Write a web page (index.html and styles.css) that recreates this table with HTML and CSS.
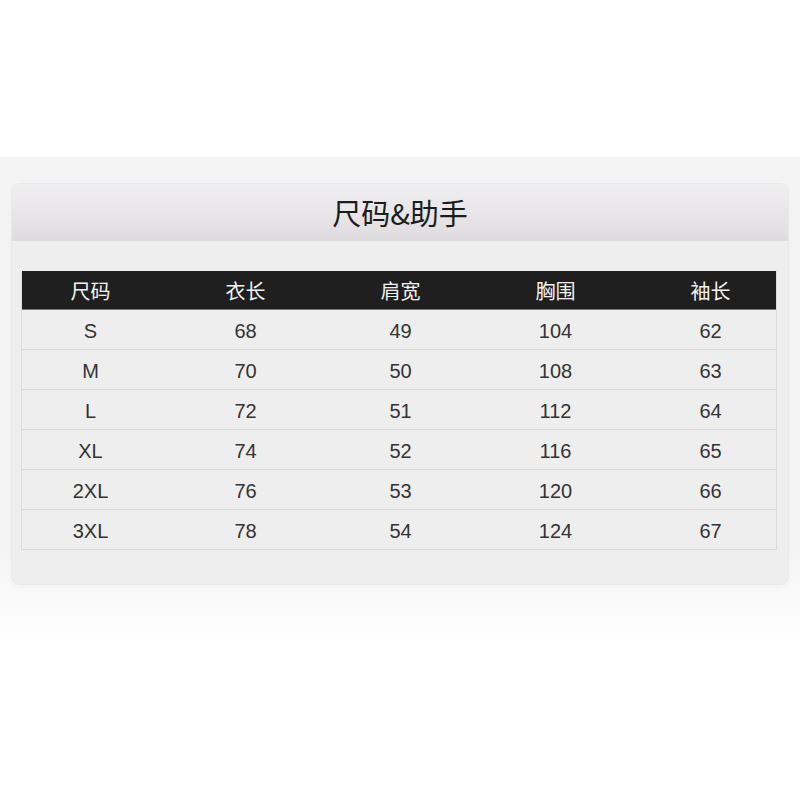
FILE: index.html
```html
<!DOCTYPE html>
<html lang="zh">
<head>
<meta charset="utf-8">
<title>尺码&amp;助手</title>
<link rel="stylesheet" href="styles.css">
</head>
<body>
<div class="band">
  <div class="card">
    <div class="card-head">尺码&amp;助手</div>
    <div class="card-body">
      <div class="table">
        <div class="row head"><div class="cells"><span>尺码</span><span>衣长</span><span>肩宽</span><span>胸围</span><span>袖长</span></div></div>
        <div class="row"><div class="cells"><span>S</span><span>68</span><span>49</span><span>104</span><span>62</span></div></div>
        <div class="row"><div class="cells"><span>M</span><span>70</span><span>50</span><span>108</span><span>63</span></div></div>
        <div class="row"><div class="cells"><span>L</span><span>72</span><span>51</span><span>112</span><span>64</span></div></div>
        <div class="row"><div class="cells"><span>XL</span><span>74</span><span>52</span><span>116</span><span>65</span></div></div>
        <div class="row"><div class="cells"><span>2XL</span><span>76</span><span>53</span><span>120</span><span>66</span></div></div>
        <div class="row"><div class="cells"><span>3XL</span><span>78</span><span>54</span><span>124</span><span>67</span></div></div>
      </div>
    </div>
  </div>
</div>
</body>
</html>
```

FILE: styles.css
```css
html, body {
  margin: 0;
  padding: 0;
  background: #ffffff;
}
body {
  font-family: "Liberation Sans", "Noto Sans CJK SC", sans-serif;
  color: #333;
}
.band {
  margin-top: 157px;
  padding: 26px 11px 60px;
  background: linear-gradient(to bottom, #f4f4f4 0%, #f4f4f4 80%, #ffffff 100%);
}
.card {
  height: 400px;
  border: 1px solid #e9e9e9;
  border-radius: 9px;
  background: #efeeef;
  overflow: hidden;
  box-shadow: 0 2px 6px rgba(0,0,0,0.03);
}
.card-head {
  height: 56px;
  border-bottom: 1px solid #dcd9dc;
  background: linear-gradient(to bottom, #efeef0 0%, #e8e6e9 50%, #dfdcdf 100%);
  display: flex;
  align-items: center;
  justify-content: center;
  font-family: "Noto Sans CJK SC", sans-serif;
  font-size: 29px;
  color: #1c1c1c;
}
.card-body {
  padding: 30px 11px 0 9px;
}
.table {
  border-left: 1px solid #dcdcdc;
  border-right: 1px solid #dcdcdc;
}
.row {
  height: 39px;
  border-bottom: 1px solid #d9d9d9;
  background: #efeeef;
}
.row.head {
  height: 38px;
  background: #1f1f1f;
  border-bottom: 1px solid #777;
}
.cells {
  display: grid;
  grid-template-columns: repeat(5, 155px);
  margin: 0 -10px 0 -9px;
  height: 100%;
  box-sizing: border-box;
  padding-top: 3px;
  align-items: center;
  justify-items: center;
  font-size: 20px;
  color: #333333;
}
.head .cells {
  padding-top: 1px;
  font-family: "Noto Sans CJK SC", sans-serif;
  font-size: 20px;
  color: #f2f2f2;
}
```
